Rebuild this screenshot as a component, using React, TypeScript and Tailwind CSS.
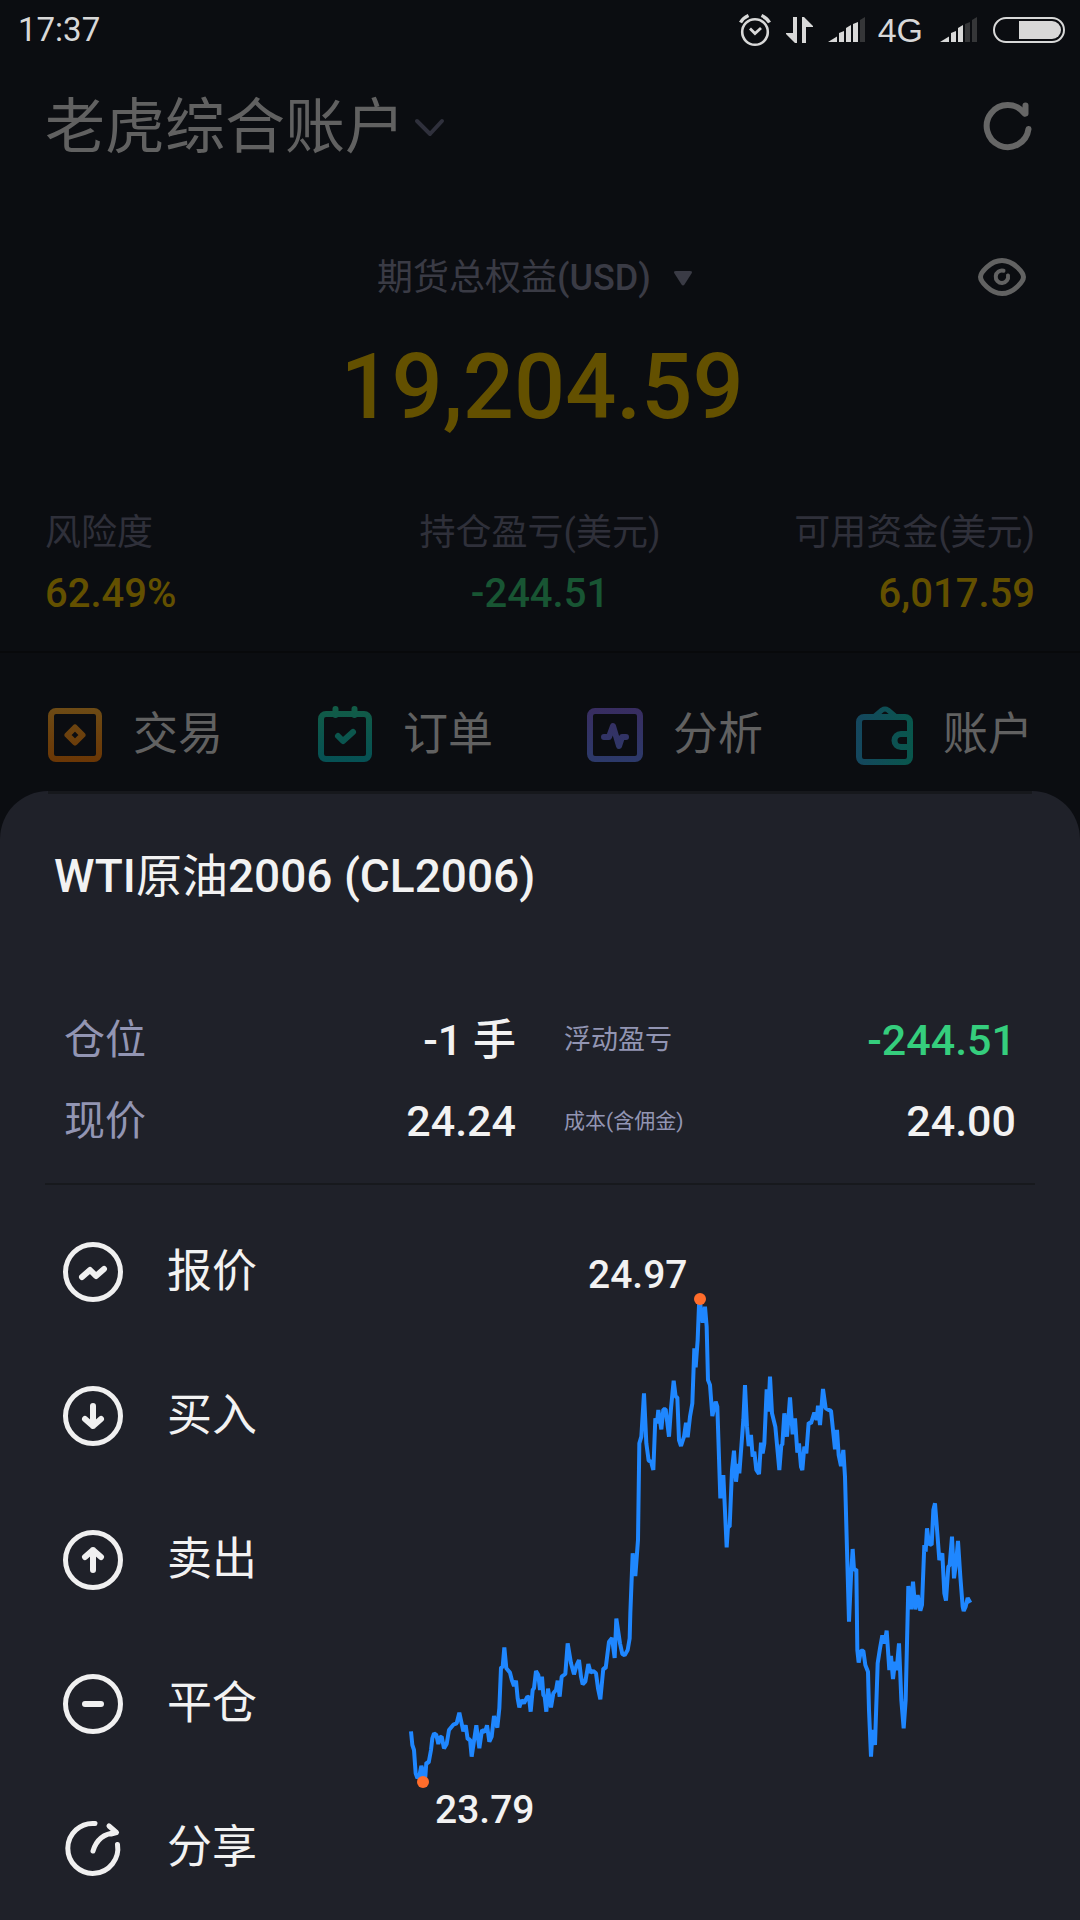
import type { ReactNode } from 'react'

// price line in thirds of a pixel, drawn inside a scaled group
const PRICE_LINE = `
33,1474 37,1515 42,1530 47,1600 52,1614 58,1608 64,1578 68,1590 71,1622 76,1610 79,1568 86,1568
93,1530 97,1495 102,1480 109,1485 115,1512 120,1492 125,1490 132,1525 140,1512 147,1470 160,1454
170,1450 178,1418 190,1474 197,1456 203,1498 210,1498 215,1550 229,1456 238,1525 246,1470 255,1476
261,1456 268,1505 275,1490 282,1428 292,1463 298,1405 303,1283 308,1280 313,1222 319,1285 330,1298
336,1322 342,1338 348,1322 353,1375 358,1402 365,1380 372,1390 382,1370 387,1372 392,1415 398,1350
402,1345 408,1293 415,1305 420,1350 426,1310 430,1365 434,1370 439,1415 444,1346 453,1402 460,1360
468,1350 473,1322 479,1370 485,1310 496,1302 503,1210 513,1270 522,1303 530,1275 537,1260 543,1310
548,1333 556,1325 565,1272 572,1298 580,1293 588,1300 594,1345 601,1378 610,1285 617,1285 627,1205
636,1194 644,1254 649,1136 660,1210 667,1242 674,1246 683,1230 689,1195 691,1120 698,940 706,1008
714,900 718,610 724,590 732,460 739,610 746,662 753,665 760,690 766,535 771,550 775,510 784,568
790,508 797,508 807,590 813,505 821,422 827,470 832,472 837,600 843,618 852,590 858,548 863,592
870,530 877,490 883,325 887,382 893,300 897,195 900,185 908,248 915,200 920,260 924,420 930,435
937,528 947,485 952,500 961,775 970,705 980,922 984,860 989,860 996,690 1002,632 1008,725 1014,672
1018,700 1027,580 1030,540 1035,435 1041,560 1046,618 1053,585 1058,650 1063,635 1069,690 1077,702
1083,608 1088,640 1093,610 1100,448 1105,515 1110,410 1116,520 1126,560 1132,625 1138,690 1144,615
1147,615 1153,520 1161,590 1170,472 1178,583 1185,535 1192,638 1197,610 1203,680 1207,690 1213,620
1219,640 1226,548 1233,550 1243,518 1250,540 1254,497 1260,555 1269,447 1277,505 1286,510 1293,512
1305,628 1311,570 1316,645 1323,678 1330,630 1335,710 1341,930 1347,1145 1353,1010 1358,927
1362,990 1369,988 1372,1230 1376,1268 1383,1232 1390,1232 1396,1275 1404,1295 1407,1410 1413,1550
1418,1470 1425,1515 1433,1270 1440,1225 1447,1186 1454,1210 1460,1172 1468,1290 1473,1248
1479,1317 1485,1265 1490,1290 1497,1210 1504,1380 1511,1465 1517,1380 1525,1038 1533,1108
1539,1025 1546,1108 1553,1065 1561,1112 1566,1095 1573,915 1577,935 1581,865 1587,912 1595,915
1600,810 1605,790 1612,880 1618,960 1627,940 1633,1060 1638,1082 1645,980 1649,975 1656,890
1662,1015 1668,970 1674,903 1681,1010 1688,1100 1691,1113 1697,1100 1703,1074 1711,1088`

const SignalBars = ({ level }: { level: number }) => (
  <svg viewBox="0 0 38 26" className="h-[26px] w-[38px]">
    <path d="M0 25 L9 19.5 V25 Z" fill="#d8d8d8" />
    {['M11 25V16l5-2v11z', 'M18 25V11l5-3v17z', 'M25 25V7l5-2v20z', 'M32 25V3l5-3v25z'].map((d, i) => (
      <path key={d} d={d} fill={i < level ? '#d8d8d8' : '#353638'} />
    ))}
  </svg>
)

const StatusBar = () => (
  <div className="flex h-[60px] items-center justify-between pl-[18px] pr-[15px] text-[#d8d8d8]">
    <span className="text-[33px] leading-[60px]">17:37</span>
    <div className="flex items-center">
      <svg viewBox="0 0 34 34" className="mr-[14px] size-[34px]" fill="none" stroke="#d8d8d8">
        <circle cx="17" cy="19" r="12.8" strokeWidth="2.6" />
        <path d="M12 15.5 L17 20.5 L23 15" strokeWidth="2.8" />
        <path d="M2.5 9.5 Q5 5 10.5 2.5 M31.5 9.5 Q29 5 23.5 2.5" strokeWidth="3.4" />
      </svg>
      <svg viewBox="0 0 28 28" className="mr-[14px] size-[28px]" fill="#d8d8d8">
        <path d="M7 1h4v26h-2L0 18v-1h7z" />
        <path d="M16 27h4V11h7v-1L18 1h-2z" />
      </svg>
      <SignalBars level={3} />
      <span className="ml-3 mr-[17px] font-['Liberation_Sans',sans-serif] text-[34px] leading-[60px]">4G</span>
      <SignalBars level={2} />
      <svg viewBox="0 0 72 26" className="ml-[15px] h-[26px] w-[72px]">
        <rect x="1" y="1" width="70" height="24" rx="12" fill="none" stroke="#d8d8d8" strokeWidth="2" />
        <path d="M26 4h33a9 9 0 0 1 0 18H26z" fill="#d8d8d8" />
      </svg>
    </div>
  </div>
)

interface StatProps {
  label: string
  value: string
  className: string
}

const Stat = ({ label, value, className }: StatProps) => (
  <div className={className}>
    <div className="text-[36px] leading-[60px] text-[#2f303a]">{label}</div>
    <div className="text-[40px] font-medium leading-[62px]">{value}</div>
  </div>
)

const Tab = ({ label, children }: { label: string; children: ReactNode }) => (
  <button type="button" className="flex items-center gap-7 pl-[45px] text-[45px] leading-[60px] text-[#616161]">
    <svg viewBox="0 0 60 60" className="size-[60px] shrink-0" fill="none" strokeWidth="6" strokeLinecap="round" strokeLinejoin="round">
      {children}
    </svg>
    {label}
  </button>
)

const Gradient = ({ id, from, to, flat }: { id: string; from: string; to: string; flat?: boolean }) => (
  <linearGradient id={id} gradientUnits="userSpaceOnUse" x1="0" y1="0" x2={flat ? 60 : 0} y2={flat ? 0 : 60}>
    <stop offset="0" stopColor={from} />
    <stop offset="1" stopColor={to} />
  </linearGradient>
)

const Tabs = () => (
  <nav className="grid grid-cols-4 pb-[26px] pt-[52px]">
    <Tab label="交易">
      <Gradient id="trade" from="#6d4c16" to="#6a3504" />
      <g stroke="url(#trade)">
        <rect x="6" y="6" width="48" height="48" rx="5" />
        <path d="M30 22.500 L37.500 30 L30 37.500 L22.500 30 Z" />
      </g>
    </Tab>
    <Tab label="订单">
      <Gradient id="order" from="#125c46" to="#055055" />
      <g stroke="url(#order)">
        <rect x="6" y="9" width="48" height="45" rx="5" />
        <path d="M20.500 4v6M39.500 4v6" />
        <path d="M23 31 L28 36 L38 27" />
      </g>
    </Tab>
    <Tab label="分析">
      <Gradient id="analysis" from="#392c60" to="#2b3a6a" />
      <g stroke="url(#analysis)">
        <rect x="5" y="6" width="50" height="48" rx="5" />
        <path d="M19 32h5l4-11 6 20 3-9h4" />
      </g>
    </Tab>
    <Tab label="账户">
      <Gradient id="account" from="#15465f" to="#08574b" flat />
      <g stroke="url(#account)">
        <rect x="4" y="12" width="51" height="45" rx="5" />
        <path d="M20 11 L27 5 Q30 3 33 5 L40 11" strokeWidth="5" />
        <path d="M53 29h-7a6.500 6.500 0 0 0 0 13h7" />
      </g>
    </Tab>
  </nav>
)

const Overview = () => (
  <header>
    <div className="flex items-center justify-between pl-[45px] pr-[46px] pt-6">
      <button type="button" className="flex items-center gap-2 pt-1 text-[60px] leading-[80px] text-[#616161]">
        老虎综合账户
        <svg viewBox="0 0 32 20" className="h-5 w-8" fill="none" stroke="#2f303c" strokeWidth="4" strokeLinecap="round" strokeLinejoin="round">
          <path d="M4 3 L17 16 L29 3" />
        </svg>
      </button>
      <button type="button" aria-label="刷新">
        <svg viewBox="0 0 52 52" className="size-[52px]" fill="none" stroke="#666" strokeWidth="6" strokeLinecap="round" strokeLinejoin="round">
          <path d="M46.500 29 A21 21 0 1 1 42.500 13.500" />
          <path d="M43.500 5.500 V13.500" />
        </svg>
      </button>
    </div>

    <div className="grid grid-cols-[1fr_auto_1fr] items-center pr-[52px] pt-20">
      <button type="button" className="col-start-2 flex items-center gap-[22px] pl-[42px] text-[36px] leading-[60px] text-[#3a3b45]">
        <span>
          期货总权益<span className="font-medium">(USD)</span>
        </span>
        <svg viewBox="0 0 20 16" className="h-4 w-5" fill="#3a3b45">
          <path d="M3 1h14q3 0 1.500 2.500l-7 11q-1.500 2-3 0l-7-11Q0 1 3 1z" />
        </svg>
      </button>
      <button type="button" aria-label="显示金额" className="justify-self-end">
        <svg viewBox="0 0 52 42" className="h-[42px] w-[52px]" fill="none" stroke="#626262" strokeWidth="5" strokeLinecap="round">
          <path d="M4.500 20 C4.500 16 14 3.500 26 3.500 S47.500 16 47.500 20 38 36.500 26 36.500 4.500 24 4.500 20Z" />
          <path d="M32 18.500 A6.200 6.200 0 1 1 27.500 13.800" strokeWidth="4" />
        </svg>
      </button>
    </div>

    <div className="pl-1 pt-[24px] text-center text-[90px] font-medium leading-[112px] text-[#635000]">19,204.59</div>

    <div className="grid grid-cols-3 px-[45px] pb-[26px] pt-[59px]">
      <Stat label="风险度" value="62.49%" className="text-left text-[#635000]" />
      <Stat label="持仓盈亏(美元)" value="-244.51" className="text-center text-[#185533]" />
      <Stat label="可用资金(美元)" value="6,017.59" className="text-right text-[#635000]" />
    </div>
    <hr className="border-t-2 border-[#08090b]" />
    <Tabs />
  </header>
)

interface PositionCellProps {
  label: string
  labelClass: string
  value: string
  valueClass?: string
}

const PositionCell = ({ label, labelClass, value, valueClass = 'text-[#f2f2f2]' }: PositionCellProps) => (
  <div className="flex h-[81px] items-center justify-between">
    <dt className={`text-[#9295b3] ${labelClass}`}>{label}</dt>
    <dd className={`text-[43px] font-medium ${valueClass}`}>{value}</dd>
  </div>
)

const Action = ({ label, children }: { label: string; children: ReactNode }) => (
  <li>
    <button type="button" className="flex h-[144px] items-center gap-[43px] text-[45px] text-[#f2f2f2]">
      <svg viewBox="0 0 62 62" className="size-[62px]" fill="none" stroke="#f0f0f0" strokeWidth="6" strokeLinecap="round" strokeLinejoin="round">
        {children}
      </svg>
      {label}
    </button>
  </li>
)

const Ring = () => <circle cx="31" cy="31" r="27.500" strokeWidth="5" />

const PriceChart = () => (
  <svg viewBox="0 0 580 600" className="w-full" role="img" aria-label="价格走势">
    <g transform="scale(0.33333)">
      <polyline points={PRICE_LINE} fill="none" stroke="#1f87ff" strokeWidth="12" strokeLinejoin="bevel" />
    </g>
    <circle cx="300" cy="59" r="6" fill="#ff6d2b" />
    <circle cx="23" cy="542" r="6" fill="#ff6d2b" />
    <g fill="#f2f2f2" className="text-[39px] font-medium">
      <text x="188" y="48">24.97</text>
      <text x="35" y="583">23.79</text>
    </g>
  </svg>
)

const PositionSheet = () => (
  <section className="grow rounded-t-[48px] bg-[#1f2129]">
    <div className="mx-12 h-[3px] bg-[#16181c]" />
    <h1 className="px-[54px] pt-[52px] text-[46px] leading-[60px] text-[#f2f2f2]">
      <span className="font-medium">WTI</span>原油<span className="font-medium">2006 (CL2006)</span>
    </h1>

    <dl className="mx-[45px] grid grid-cols-2 gap-x-12 border-b-2 border-[#17191d] px-[19px] pb-[21px] pt-[94px]">
      <PositionCell label="仓位" labelClass="text-[41px]" value="-1 手" />
      <PositionCell label="浮动盈亏" labelClass="text-[27px]" value="-244.51" valueClass="text-[#35ce7d]" />
      <PositionCell label="现价" labelClass="text-[41px]" value="24.24" />
      <PositionCell label="成本(含佣金)" labelClass="text-[21px]" value="24.00" />
    </dl>

    <div className="flex pl-[62px] pr-[100px] pt-[15px]">
      <ul className="w-[338px] shrink-0">
        <Action label="报价">
          <Ring />
          <path d="M20 36 L28 29 L34 35 L42 28" />
        </Action>
        <Action label="买入">
          <Ring />
          <path d="M31 21 V41 M23 34 L31 41 L39 34" />
        </Action>
        <Action label="卖出">
          <Ring />
          <path d="M31 41 V21 M23 28 L31 21 L39 28" />
        </Action>
        <Action label="平仓">
          <Ring />
          <path d="M23 31 H39" />
        </Action>
        <Action label="分享">
          <path d="M33 6.500 A25 25 0 1 0 55.500 27.500" strokeWidth="5" />
          <path d="M31 34 Q36 17 54 15.500 M47 9 L54.500 15.500 L49 17" strokeWidth="5" />
        </Action>
      </ul>
      <div className="grow pt-[40px]">
        <PriceChart />
      </div>
    </div>
  </section>
)

export default function App() {
  return (
    <main className="flex min-h-screen flex-col bg-[#0b0d11] font-['Roboto','Noto_Sans_CJK_SC',sans-serif]">
      <StatusBar />
      <Overview />
      <PositionSheet />
    </main>
  )
}
